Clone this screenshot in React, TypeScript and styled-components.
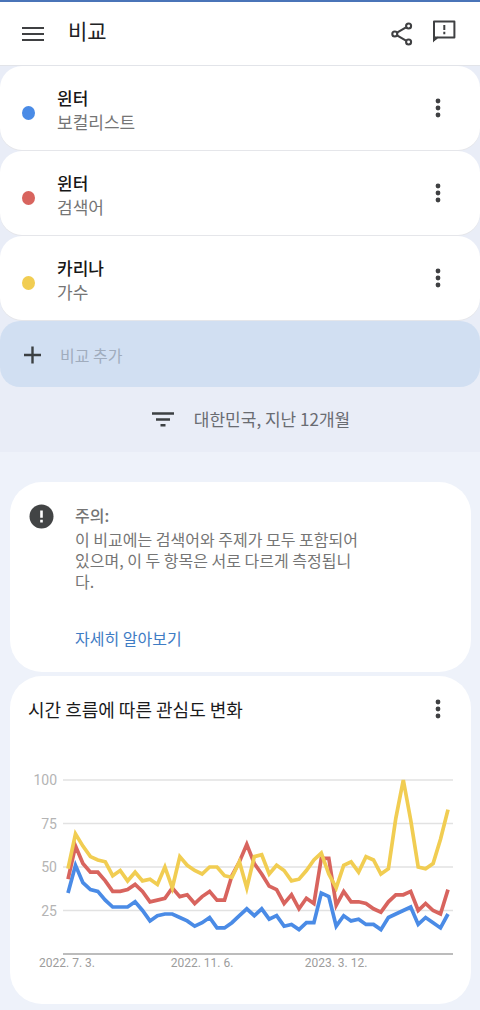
import React from 'react';
import styled, { createGlobalStyle } from 'styled-components';

const GlobalStyle = createGlobalStyle`
  *, *::before, *::after { box-sizing: border-box; }
  body {
    margin: 0;
    background: #eef2fa;
    color: #202124;
    font-family: 'Noto Sans CJK KR', sans-serif;
  }
  h1, h2, p, ul { margin: 0; padding: 0; }
  button { font: inherit; color: inherit; }
`;

const Page = styled.div`
  border-top: 2px solid #4a74b8;
`;

const TopBar = styled.header`
  display: flex;
  align-items: center;
  height: 63px;
  padding: 0 20px;
  background: #fff;
`;

const IconButton = styled.button`
  display: flex;
  align-items: center;
  justify-content: center;
  width: 26px;
  height: 32px;
  padding: 0;
  border: 0;
  background: none;
  color: #3f4042;
  cursor: pointer;
`;

const PageTitle = styled.h1`
  flex: 1;
  padding: 0 0 8px 22px;
  font-size: 21px;
  font-weight: 400;
  line-height: 30px;
`;

const Actions = styled.div`
  display: flex;
  gap: 16px;
  padding-right: 3px;
`;

const Terms = styled.section`
  border-top: 1px solid #e2e4e9;
  background: #e9edf7;
`;

const TermList = styled.ul`
  display: flex;
  flex-direction: column;
  gap: 1px;
  list-style: none;
`;

const TermCard = styled.li`
  display: flex;
  align-items: center;
  height: 84px;
  padding: 0 29px 0 22px;
  border-radius: 22px;
  background: #fff;
  box-shadow: 0 1px 0 #e5e6ea;
`;

const Dot = styled.span<{ $color: string }>`
  width: 13px;
  height: 14px;
  margin-top: 10px;
  border-radius: 50%;
  background: ${(p) => p.$color};
`;

const TermText = styled.div`
  flex: 1;
  padding: 4px 0 0 22px;
  line-height: 24px;
`;

const TermName = styled.p`
  font-size: 17px;
  font-weight: 500;
  color: #161616;
`;

const TermKind = styled.p`
  font-size: 17px;
  color: #757575;
`;

const AddButton = styled.button`
  display: flex;
  align-items: center;
  gap: 18px;
  width: 100%;
  height: 66px;
  margin-top: 1px;
  padding: 2px 23px 0;
  border: 0;
  border-radius: 20px;
  background: #d1dff2;
  font-size: 16px;
  color: #a0acbd;
  cursor: pointer;
`;

const FilterButton = styled.button`
  display: flex;
  align-items: center;
  justify-content: center;
  gap: 20px;
  width: 100%;
  height: 65px;
  padding: 0 0 2px 22px;
  border: 0;
  background: none;
  font-size: 17px;
  color: #696c72;
  cursor: pointer;
`;

const Content = styled.main`
  display: flex;
  flex-direction: column;
  gap: 4px;
  padding: 30px 9px 6px 10px;
`;

const Card = styled.section`
  border-radius: 32px;
  background: #fff;
`;

const NoteCard = styled(Card)`
  display: flex;
  align-items: flex-start;
  gap: 21px;
  padding: 22px 20px 22px 19px;
`;

const NoteBody = styled.div`
  max-width: 292px;
  font-size: 16px;
  line-height: 21px;
  color: #757575;
`;

const NoteTitle = styled.h2`
  margin-bottom: 2px;
  font-size: 16px;
  font-weight: 500;
  line-height: 23px;
`;

const NoteLink = styled.a`
  display: inline-block;
  margin-top: 34px;
  line-height: 24px;
  color: #3f7cc4;
  text-decoration: none;
`;

const ChartHeader = styled.div`
  display: flex;
  align-items: center;
  justify-content: space-between;
  padding: 17px 20px 0 18px;
`;

const ChartTitle = styled.h2`
  font-size: 18px;
  font-weight: 400;
  line-height: 32px;
  color: #1b1b1d;
`;

const Chart = styled.svg`
  display: block;
  width: 100%;
  height: auto;
  font-family: Roboto, sans-serif;
`;

const MenuIcon = () => (
  <svg width="22" height="16" viewBox="0 0 22 16" aria-hidden="true">
    <path d="M0 2h22M0 8h22M0 14h22" stroke="currentColor" strokeWidth="2.2" />
  </svg>
);

const ShareIcon = () => (
  <svg width="22" height="24" viewBox="0 0 22 24" fill="none" stroke="currentColor" strokeWidth="2.1" aria-hidden="true">
    <path d="M6 10.7 15 5.3M6 13.3l9 5.4" />
    <circle cx="3.8" cy="12" r="2.5" />
    <circle cx="17.6" cy="4" r="2.5" />
    <circle cx="17.6" cy="20" r="2.5" />
  </svg>
);

const FeedbackIcon = () => (
  <svg width="24" height="28" viewBox="0 1 24 28" fill="none" aria-hidden="true">
    <path d="M2 21V2.6h20.4v16H5.2z" stroke="currentColor" strokeWidth="2" strokeLinejoin="round" />
    <path d="M1 17v6.6L6.4 18z" fill="currentColor" />
    <path d="M12.3 6v5M12.3 12.8v2.4" stroke="currentColor" strokeWidth="2" />
  </svg>
);

const MoreIcon = () => (
  <svg width="6" height="20" viewBox="0 0 6 20" fill="currentColor" aria-hidden="true">
    <circle cx="3" cy="3" r="2.4" />
    <circle cx="3" cy="10" r="2.4" />
    <circle cx="3" cy="17" r="2.4" />
  </svg>
);

const PlusIcon = () => (
  <svg width="19" height="18" viewBox="0 0 19 18" aria-hidden="true">
    <path d="M1 9h17M9.5 0.5v17" stroke="#3c4043" strokeWidth="2.4" />
  </svg>
);

const FilterIcon = () => (
  <svg width="22" height="16" viewBox="0 0 22 16" aria-hidden="true">
    <path d="M0 2.5h22M4 8.5h14M8.5 14.2h5" stroke="#3c4043" strokeWidth="2.4" />
  </svg>
);

const WarningIcon = () => (
  <svg width="25" height="25" viewBox="0 0 25 25" aria-hidden="true">
    <circle cx="12.5" cy="12.5" r="12" fill="#424445" />
    <path d="M12.5 6.5v7.3M12.5 15.8v2.6" stroke="#fff" strokeWidth="2.6" />
  </svg>
);

const BLUE = '#4a8be6';
const RED = '#d8645e';
const YELLOW = '#f1cd52';

const terms = [
  { name: '윈터', kind: '보컬리스트', color: BLUE },
  { name: '윈터', kind: '검색어', color: RED },
  { name: '카리나', kind: '가수', color: YELLOW },
];

// Weekly interest values, 0 to 100.
const series = [
  {
    color: BLUE,
    values: [35, 51, 41, 37, 36, 31, 27, 27, 27, 30, 25, 19, 22, 23, 23, 21, 19, 16, 18, 21, 15, 15, 18, 22, 26, 22, 26, 20, 22, 16, 17, 14, 18, 18, 35, 33, 16, 22, 19, 20, 17, 17, 14, 21, 23, 25, 27, 17, 21, 18, 15, 23],
  },
  {
    color: RED,
    values: [43, 62, 52, 47, 47, 42, 36, 36, 37, 40, 36, 30, 31, 32, 38, 33, 34, 29, 33, 36, 31, 31, 45, 53, 63, 52, 46, 39, 37, 29, 34, 26, 32, 29, 55, 55, 28, 36, 30, 30, 29, 26, 24, 30, 34, 34, 36, 25, 29, 25, 23, 37],
  },
  {
    color: YELLOW,
    values: [49, 69, 62, 56, 54, 53, 45, 48, 42, 47, 42, 43, 40, 50, 38, 56, 51, 48, 46, 50, 50, 45, 44, 53, 38, 56, 57, 46, 51, 48, 42, 43, 48, 54, 58, 46, 38, 51, 53, 47, 56, 54, 46, 49, 78, 100, 77, 50, 49, 52, 66, 83],
  },
];

const PLOT = { left: 58, right: 438, bottom: 229, height: 174 };

const yOf = (value: number) => PLOT.bottom - (value / 100) * PLOT.height;

const toPoints = (values: number[]) =>
  values
    .map((v, i) => {
      const x = PLOT.left + (i / (values.length - 1)) * (PLOT.right - PLOT.left);
      return `${x.toFixed(1)},${yOf(v).toFixed(1)}`;
    })
    .join(' ');

const dates = [
  { label: '2022. 7. 3.', x: 57 },
  { label: '2022. 11. 6.', x: 192 },
  { label: '2023. 3. 12.', x: 326 },
];

const TrendChart = () => (
  <Chart viewBox="0 0 461 279" role="img" aria-label="시간 흐름에 따른 관심도 변화">
    {[100, 75, 50, 25].map((tick) => (
      <g key={tick}>
        <line x1="53" x2="443" y1={yOf(tick)} y2={yOf(tick)} stroke="#e2e2e2" strokeWidth="1.3" />
        <text x="47" y={yOf(tick) + 5} textAnchor="end" fontSize="14" fill="#b4b4b4">
          {tick}
        </text>
      </g>
    ))}
    <line x1="53" x2="443" y1={PLOT.bottom} y2={PLOT.bottom} stroke="#a6a6a6" strokeWidth="1.4" />
    {series.map((s) => (
      <polyline key={s.color} points={toPoints(s.values)} fill="none" stroke={s.color} strokeWidth="3.7" />
    ))}
    {dates.map((d) => (
      <text key={d.label} x={d.x} y="242" textAnchor="middle" fontSize="12" fill="#9c9c9c">
        {d.label}
      </text>
    ))}
  </Chart>
);

export default function App() {
  return (
    <>
      <GlobalStyle />
      <Page>
        <TopBar>
          <IconButton aria-label="메뉴">
            <MenuIcon />
          </IconButton>
          <PageTitle>비교</PageTitle>
          <Actions>
            <IconButton aria-label="공유">
              <ShareIcon />
            </IconButton>
            <IconButton aria-label="의견 보내기">
              <FeedbackIcon />
            </IconButton>
          </Actions>
        </TopBar>

        <Terms>
          <TermList>
            {terms.map((term) => (
              <TermCard key={term.color}>
                <Dot $color={term.color} />
                <TermText>
                  <TermName>{term.name}</TermName>
                  <TermKind>{term.kind}</TermKind>
                </TermText>
                <IconButton aria-label="옵션 더보기">
                  <MoreIcon />
                </IconButton>
              </TermCard>
            ))}
          </TermList>
          <AddButton>
            <PlusIcon />
            비교 추가
          </AddButton>
          <FilterButton>
            <FilterIcon />
            대한민국, 지난 12개월
          </FilterButton>
        </Terms>

        <Content>
          <NoteCard>
            <WarningIcon />
            <NoteBody>
              <NoteTitle>주의:</NoteTitle>
              <p>이 비교에는 검색어와 주제가 모두 포함되어 있으며, 이 두 항목은 서로 다르게 측정됩니다.</p>
              <NoteLink href="#learn-more">자세히 알아보기</NoteLink>
            </NoteBody>
          </NoteCard>
          <Card>
            <ChartHeader>
              <ChartTitle>시간 흐름에 따른 관심도 변화</ChartTitle>
              <IconButton aria-label="옵션 더보기">
                <MoreIcon />
              </IconButton>
            </ChartHeader>
            <TrendChart />
          </Card>
        </Content>
      </Page>
    </>
  );
}
